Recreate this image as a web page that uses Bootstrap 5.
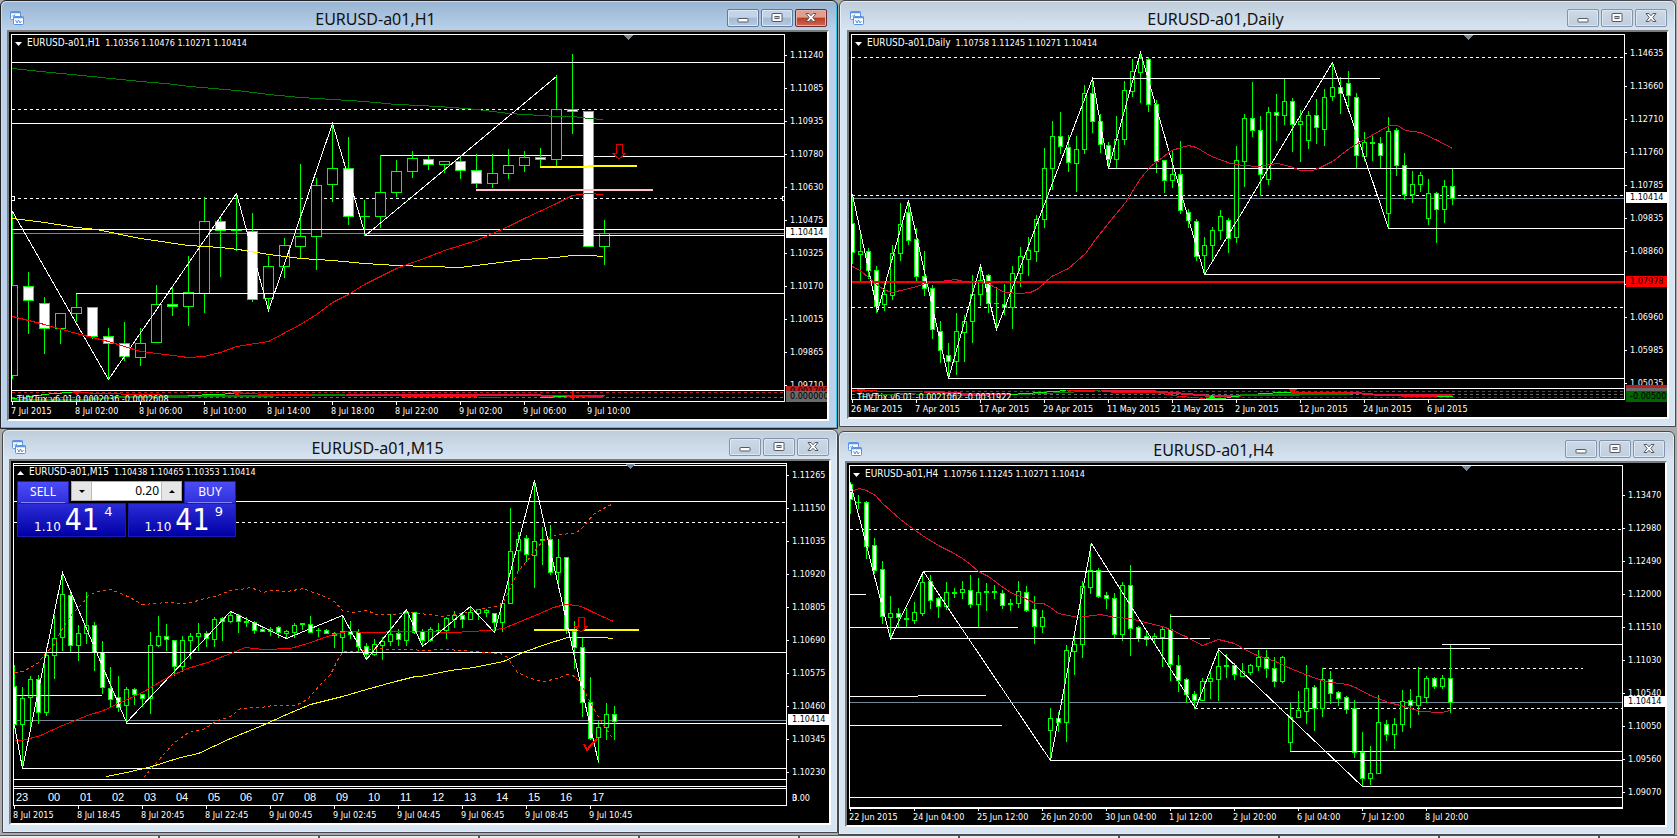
<!DOCTYPE html>
<html lang="en">
<head>
<meta charset="utf-8">
<meta name="viewport" content="width=device-width, initial-scale=1">
<title>EURUSD-a01 charts</title>
<link rel="stylesheet" href="https://cdn.jsdelivr.net/npm/bootstrap@5.3.0/dist/css/bootstrap.min.css">
<style>
:root{--ui:"DejaVu Sans Condensed","DejaVu Sans","Noto Sans",sans-serif}
body{background:#ababab;font-family:var(--ui);overflow:hidden}
.desk{padding-right:1px}
.win{border:1px solid #45484c;border-radius:6px 6px 0 0;background:linear-gradient(#bfcddb,#d7e4f2 29px);box-shadow:inset 0 0 0 1px #e3edf7;padding:0 6px 7px}
.win-active{border-color:#222;background:linear-gradient(#98b4d2,#b9d1ea 29px);box-shadow:inset -1px -1px 0 #35c5e4,inset 1px 1px 0 #c9dcf0;padding-right:8px}
.pos-tr{margin-left:1px;padding:0 6px 7px 7px}
.pos-bl{margin-left:2px;}
.pos-br{margin-right:1px;margin-top:4px;padding-right:7px}
.bar{height:29px;padding:0 2px 0 3px}
.bar h2{font:400 16px/20px "Noto Sans",sans-serif;color:#111;margin:0;padding-top:8px}
.bar .app{margin-top:10px}
.ctl{width:32px;height:18px;margin-top:8px;border:1px solid #8592ad;border-radius:2px;background:linear-gradient(#ccd9e7,#c0cedd);box-shadow:inset 0 0 0 1px #dce7f2;padding:0;display:flex;align-items:center;justify-content:center}
.win-active .ctl{border-color:#64789a;background:linear-gradient(#c3d4e8 45%,#a4bad3 50%,#b5cbe3)}
.win-active .ctl-close{border-color:#6e2a2c;background:linear-gradient(#e0a090 45%,#b93a28 50%,#cc6a50);box-shadow:inset 0 0 0 1px #e5b0a5}
.client{border:2px solid;border-color:#7b7b7b #fff #fff #7b7b7b;background:#000;color:#fff;padding:2px 0 0 2px;font-size:9px;line-height:11px;overflow:hidden}
.pane{display:grid;grid-template-columns:minmax(0,1fr) 42px;margin-bottom:1px}
.pane-end{margin-bottom:0}
.plot{border:1px solid #fff;position:relative;overflow:hidden}
.plot svg{display:block;width:100%;height:100%}
.h-h1{height:355px}.h-d1{height:353px}.h-m15{height:315px}.h-h4{height:331px}
.h-s12{height:12px}.h-s11{height:11px}.h-s8{height:8px}.h-s18{height:18px}
.head{position:absolute;left:3px;top:2px;display:flex;gap:5px;white-space:pre}
.head>svg{width:7px;height:4px;margin-top:5px}
.head b{font-weight:400;font-size:10px;line-height:12px}
.head span{line-height:13px}
.axis{position:relative;white-space:nowrap}
.scale{height:100%;overflow:hidden}
.scale div{height:33px;display:flex;align-items:center}
.scale div::before{content:"";width:2px;height:1px;background:#fff;margin-right:3px}
.tag{position:absolute;left:1px;right:0;height:11px;padding-left:4px;background:#fff;color:#000;line-height:11px;overflow:hidden}
.times{display:flex;height:17px;overflow:hidden;white-space:nowrap}
.times span{flex:0 0 64px}
.times span::before{content:"";display:block;width:1px;height:3px;background:#fff;margin:0 0 1px 1px}
.sub-note{position:absolute;left:5px;top:3px;white-space:pre}
.hours{font:11px/16px "Liberation Sans",sans-serif;display:flex}
.hours span{flex:0 0 32px;padding-left:2px}
.deal{position:absolute;left:3px;top:17px;width:219px;height:56px}
.deal button{border:1px solid #1a1ab4;color:#fff;padding:0;border-radius:0}
.deal .side{width:52px;height:22px;background:linear-gradient(#4c4cf6,#3030dc);font:12px/18px "Noto Sans",sans-serif;border-bottom:0}
.side::after{content:"";display:block;height:1px;margin:1px 3px 0;background:#8484f4}
.deal .px{flex:1;height:34px;background:linear-gradient(#2c2cd8,#0000a4);display:flex;align-items:flex-start;justify-content:center;font:12px/14px "DejaVu Sans",sans-serif;overflow:hidden;padding-left:4px}
.px i{font:30px/31px var(--ui);margin:0 5px 0 4px}
.px span{padding-top:16px}.px sup{top:0;font-size:13px;line-height:15px}
.vol{height:20px;background:#e6e6e6;border:1px solid #aaa;flex:1;margin:0 2px}
.deal .vol button{width:19px;height:18px;border:0;background:#e6e6e6;display:flex;align-items:center;justify-content:center}
.vol button svg{width:6px;height:3px}
.vol input{min-width:0;flex:1;width:20px;border:0;border-left:1px solid #bbb;border-right:1px solid #bbb;text-align:right;font:12px/18px "Noto Sans",sans-serif;padding:0 2px;height:18px;border-radius:0}
.foot{height:3px;margin-top:0;border-top:1px solid #555;background:repeating-linear-gradient(90deg,#e6ecf2 0 158px,#555 158px 160px)}
</style>
</head>
<body>
<svg class="d-none" aria-hidden="true">
  <symbol id="app" viewBox="0 0 14 14"><rect x=".5" y=".5" width="10" height="8" rx="1" fill="#fff" stroke="#5b92e5"/><path d="M0 1.5h11" stroke="#5b92e5" stroke-width="1.5"/><path d="M2 5.5l1-1 1 1 1-2" fill="none" stroke="#5b92e5"/><rect x="3.5" y="5.500" width="10" height="8" rx="1" fill="#fff" stroke="#5b92e5"/><path d="M3 6.500h11" stroke="#5b92e5" stroke-width="1.500"/><path d="M5.500 9l1.500 3 1.500-3 1.500 3 1.500-2" fill="none" stroke="#5b92e5"/></symbol>
  <symbol id="min" viewBox="0 0 12 12"><rect x="1" y="6.500" width="10" height="3.500" rx=".5" fill="#fff" stroke="#555a66"/></symbol>
  <symbol id="max" viewBox="0 0 12 12"><rect x="1" y="1.500" width="10" height="8" rx=".5" fill="#fff" stroke="#555a66"/><rect x="4" y="4.500" width="4" height="2" fill="#bfd0e0" stroke="#555a66"/></symbol>
  <symbol id="cls" viewBox="0 0 12 12"><path d="M1 1.500h3l2 2.300 2-2.300h3L7.800 5.500 11 9.500H8L6 7.300 4 9.500H1l3.200-4z" fill="#fff" stroke="#555a66"/></symbol>
  <symbol id="down" viewBox="0 0 7 4"><path d="M0 0h7L3.500 4z" fill="#fff"/></symbol>
  <symbol id="up" viewBox="0 0 7 4"><path d="M0 4h7L3.500 0z" fill="#fff"/></symbol>
</svg>

<main class="desk row g-0">
  <div class="col-6">
    <section class="win win-active">
      <header class="bar d-flex">
        <svg class="app" width="14" height="14"><use href="#app"/></svg>
        <h2 class="flex-fill text-center">EURUSD-a01,H1</h2>
        <div class="d-flex" style="gap:2px">
          <button class="ctl" aria-label="Minimize"><svg width="12" height="12"><use href="#min"/></svg></button>
          <button class="ctl" aria-label="Maximize"><svg width="12" height="12"><use href="#max"/></svg></button>
          <button class="ctl ctl-close" aria-label="Close"><svg width="12" height="12"><use href="#cls"/></svg></button>
        </div>
      </header>
      <div class="client">
        <div class="pane h-h1">
          <div class="plot"><svg id="h1"></svg><div class="head"><svg><use href="#down"/></svg><b>EURUSD-a01,H1</b><span>1.10356 1.10476 1.10271 1.10414</span></div></div>
          <div class="axis" data-first="5" data-labels="1.11240 1.11085 1.10935 1.10780 1.10630 1.10475 1.10325 1.10170 1.10015 1.09865 1.09710" data-tags="193,1.10414,#fff,#000"></div>
        </div>
        <div class="pane pane-end h-s12">
          <div class="plot"><svg id="h1s"></svg><div class="sub-note">THVTrix v6.01 0.0002036 -0.0002608</div></div>
          <div class="axis" data-tags="-4,0.001700,#b22222,#000;1,0.0000000,#696969,#000"></div>
        </div>
        <div class="times"><span>7 Jul 2015</span><span>8 Jul 02:00</span><span>8 Jul 06:00</span><span>8 Jul 10:00</span><span>8 Jul 14:00</span><span>8 Jul 18:00</span><span>8 Jul 22:00</span><span>9 Jul 02:00</span><span>9 Jul 06:00</span><span>9 Jul 10:00</span></div>
      </div>
    </section>

    <section class="win pos-bl">
      <header class="bar d-flex">
        <svg class="app" width="14" height="14"><use href="#app"/></svg>
        <h2 class="flex-fill text-center">EURUSD-a01,M15</h2>
        <div class="d-flex" style="gap:2px">
          <button class="ctl" aria-label="Minimize"><svg width="12" height="12"><use href="#min"/></svg></button>
          <button class="ctl" aria-label="Maximize"><svg width="12" height="12"><use href="#max"/></svg></button>
          <button class="ctl" aria-label="Close"><svg width="12" height="12"><use href="#cls"/></svg></button>
        </div>
      </header>
      <div class="client">
        <div class="pane h-m15">
          <div class="plot"><svg id="m15"></svg><div class="head"><svg><use href="#up"/></svg><b>EURUSD-a01,M15</b><span>1.10438 1.10465 1.10353 1.10414</span></div>
            <div class="deal bg-black">
              <div class="d-flex">
                <button class="side">SELL</button>
                <div class="vol d-flex">
                  <button aria-label="Decrease volume"><svg><path d="M0 0h6L3 3z"/></svg></button>
                  <input type="text" value="0.20" aria-label="Volume">
                  <button aria-label="Increase volume"><svg><path d="M0 3h6L3 0z"/></svg></button>
                </div>
                <button class="side">BUY</button>
              </div>
              <div class="d-flex" style="gap:2px">
                <button class="px" aria-label="Sell at 1.10414"><span>1.10</span><i>41</i><sup>4</sup></button>
                <button class="px" aria-label="Buy at 1.10419"><span>1.10</span><i>41</i><sup>9</sup></button>
              </div>
            </div>
          </div>
          <div class="axis" data-first="-4" data-labels="1.11265 1.11150 1.11035 1.10920 1.10805 1.10690 1.10575 1.10460 1.10345 1.10230" data-tags="251,1.10414,#fff,#000"></div>
        </div>
        <div class="pane h-s8"><div class="plot"></div><div class="axis"></div></div>
        <div class="pane pane-end h-s18">
          <div class="plot hours" id="hours"></div>
          <div class="axis" data-tags="5,3,transparent,#fff;5,0.00,transparent,#fff"></div>
        </div>
        <div class="times"><span>8 Jul 2015</span><span>8 Jul 18:45</span><span>8 Jul 20:45</span><span>8 Jul 22:45</span><span>9 Jul 00:45</span><span>9 Jul 02:45</span><span>9 Jul 04:45</span><span>9 Jul 06:45</span><span>9 Jul 08:45</span><span>9 Jul 10:45</span></div>
      </div>
    </section>
  </div>

  <div class="col-6">
    <section class="win pos-tr">
      <header class="bar d-flex">
        <svg class="app" width="14" height="14"><use href="#app"/></svg>
        <h2 class="flex-fill text-center">EURUSD-a01,Daily</h2>
        <div class="d-flex" style="gap:2px">
          <button class="ctl" aria-label="Minimize"><svg width="12" height="12"><use href="#min"/></svg></button>
          <button class="ctl" aria-label="Maximize"><svg width="12" height="12"><use href="#max"/></svg></button>
          <button class="ctl" aria-label="Close"><svg width="12" height="12"><use href="#cls"/></svg></button>
        </div>
      </header>
      <div class="client">
        <div class="pane h-d1">
          <div class="plot"><svg id="d1"></svg><div class="head"><svg><use href="#down"/></svg><b>EURUSD-a01,Daily</b><span>1.10758 1.11245 1.10271 1.10414</span></div></div>
          <div class="axis" data-first="3" data-labels="1.14635 1.13660 1.12710 1.11760 1.10785 1.09835 1.08860 - 1.06960 1.05985 1.05035" data-tags="158,1.10414,#fff,#000;242,1.07978,#f00,#000"></div>
        </div>
        <div class="pane pane-end h-s12">
          <div class="plot"><svg id="d1s"></svg><div class="sub-note">THVTrix v6.01 -0.0021062 -0.0031922</div></div>
          <div class="axis" data-tags="-3,,#b22222,#000;0,,#696969,#000;3,-0.00500,#006400,#000"></div>
        </div>
        <div class="times"><span>26 Mar 2015</span><span>7 Apr 2015</span><span>17 Apr 2015</span><span>29 Apr 2015</span><span>11 May 2015</span><span>21 May 2015</span><span>2 Jun 2015</span><span>12 Jun 2015</span><span>24 Jun 2015</span><span>6 Jul 2015</span></div>
      </div>
    </section>

    <section class="win pos-br">
      <header class="bar d-flex">
        <svg class="app" width="14" height="14"><use href="#app"/></svg>
        <h2 class="flex-fill text-center">EURUSD-a01,H4</h2>
        <div class="d-flex" style="gap:2px">
          <button class="ctl" aria-label="Minimize"><svg width="12" height="12"><use href="#min"/></svg></button>
          <button class="ctl" aria-label="Maximize"><svg width="12" height="12"><use href="#max"/></svg></button>
          <button class="ctl" aria-label="Close"><svg width="12" height="12"><use href="#cls"/></svg></button>
        </div>
      </header>
      <div class="client">
        <div class="pane h-h4">
          <div class="plot"><svg id="h4"></svg><div class="head"><svg><use href="#down"/></svg><b>EURUSD-a01,H4</b><span>1.10756 1.11245 1.10271 1.10414</span></div></div>
          <div class="axis" data-first="14" data-labels="1.13470 1.12980 1.12490 1.12000 1.11510 1.11030 1.10540 1.10050 1.09560 1.09070" data-tags="231,1.10414,#fff,#000"></div>
        </div>
        <div class="pane pane-end h-s11"><div class="plot"></div><div class="axis"></div></div>
        <div class="times"><span>22 Jun 2015</span><span>24 Jun 04:00</span><span>25 Jun 12:00</span><span>26 Jun 20:00</span><span>30 Jun 04:00</span><span>1 Jul 12:00</span><span>2 Jul 20:00</span><span>6 Jul 04:00</span><span>7 Jul 12:00</span><span>8 Jul 20:00</span></div>
      </div>
    </section>
  </div>
</main>
<div class="foot"></div>

<script src="https://cdn.jsdelivr.net/npm/bootstrap@5.3.0/dist/js/bootstrap.bundle.min.js"></script>
<script>
const END = 4000; // lines that run to the right edge are clipped by the plot

// Price scales and price tags; a dash leaves only the tick
document.querySelectorAll('.axis').forEach(a => {
  let html = '';
  if (a.dataset.labels) html += '<div class="scale"><section style="margin-top:' + a.dataset.first + 'px">' +
    a.dataset.labels.split(' ').map(t => '<div>' + (t === '-' ? '' : t) + '</div>').join('') + '</section></div>';
  (a.dataset.tags || '').split(';').filter(Boolean).forEach(t => {
    const [top, text, bg, fg] = t.split(',');
    html += `<span class="tag" style="top:${top}px;background:${bg};color:${fg}">${text}</span>`;
  });
  a.innerHTML = html;
});

document.getElementById('hours').innerHTML =
  [23, ...Array(18).keys()].map(h => '<span>' + String(h).padStart(2, '0') + '</span>').join('');

const candle = (x, half, [hi, top, bot, lo, kind]) => {
  hi = +hi; top = +top; bot = +bot; lo = +lo;
  let s = `<path d="M${x + .5} ${hi}V${top}M${x + .5} ${bot}V${lo + 1}" stroke="#0f0"/>`;
  return s + (top === bot
    ? `<path d="M${x - half} ${top + .5}h${2 * half + 1}" stroke="#0f0"/>`
    : `<rect x="${x - half + .5}" y="${top + .5}" width="${2 * half}" height="${bot - top}" fill="${kind === 'x' ? '#fff' : '#000'}" stroke="#0f0"/>`);
};
const level = ([y, a, b, color = '#fff', dash = '', w = 1]) =>
  `<path d="M${a} ${w === 1 ? y + .5 : y}H${b || END}" stroke="${color}" stroke-width="${w}" ${dash ? `stroke-dasharray="${dash}"` : ''}/>`;
const curve = ([color, pts, w = 1, dash = '']) =>
  `<polyline points="${pts}" fill="none" stroke="${color}" stroke-width="${w}" transform="translate(.5 .5)" ${dash ? `stroke-dasharray="${dash}"` : ''}/>`;

function draw(id, c) {
  const [ox, oy] = c.origin;
  const candles = (c.candles || '').trim().split(/\s*;\s*/).filter(Boolean)
    .map((t, i) => candle(c.x0 + i * c.step, c.half, t.split(' '))).join('');
  document.getElementById(id).innerHTML = `<g transform="translate(${-ox} ${-oy})" shape-rendering="crispEdges">` +
    (c.under || []).map(level).join('') + candles + (c.over || []).map(level).join('') +
    (c.curves || []).map(curve).join('') + (c.extra || '') + '</g>';
}
const arrow = (x, y) => `<path d="M${x - 3} ${y}h6v9h4l-7 6-7-6h4z" fill="#000" stroke="#e00000"/>`;
const shift = (x, y) => `<path d="M${x - 5} ${y}h10l-5 5z" fill="#778899"/>`;
const D = '3 3', SL = '#778899';

draw('h1', {
  origin: [12, 35], x0: 12, step: 16, half: 5,
  candles: `212 285 375 378 o;272 286 300 333 x;297 303 328 353 x;313 313 328 343 o;293 307 313 321 o;307 307 336 338 x;328 336 343 378 x;322 343 356 360 x;328 343 357 365 o;285 304 342 342 o;287 304 306 315 x;256 292 306 325 o;197 221 293 312 o;217 221 230 276 x;193 230 230 250 o;213 231 299 301 x;256 266 298 310 o;238 245 266 277 o;164 236 246 258 o;178 185 236 269 o;123 168 184 201 o;137 168 216 224 x;200 216 216 235 o;155 192 216 227 o;160 171 192 196 o;151 158 171 177 o;156 159 164 169 x;161 161 164 172 o;155 161 170 178 x;154 170 183 187 x;154 173 183 187 o;149 165 173 178 o;151 157 165 171 o;148 157 159 165 x;75 109 159 165 o;54 109 111 133 x;111 111 246 246 x;220 233 246 264 o`,
  under: [[233, 12, 0, SL], [109, 12, 0, '#fff', D], [198, 12, 0, '#fff', D], [155, 380, 583], [156, 583, 0]],
  over: [[62, 12], [123, 12], [229, 12], [235, 365], [293, 76], [167, 540, 588, '#ff0', '', 2], [166, 588, 637, '#ff0', '', 2], [190, 476, 653, '#ffc0cb', '', 2]],
  curves: [
    ['#fff', '12,211 108,379 236,193 268,310 332,123 365,235 556,76'],
    ['#008000', '12,68 50,72 82,75 110,78 140,81 165,83 190,86 236,90 268,94 300,97 332,99 364,101 396,104 421,105 452,107 476,109 508,113 540,115 556,116 572,116 588,118 603,119'],
    ['#ff0', '12,218 44,222 76,227 96,229 140,238 188,245 220,247 238,249 268,254 300,258 332,260 364,263 396,265 428,266 460,267 492,263 524,259 556,257 572,255 590,255 603,256'],
    ['#f00', '12,316 28,320 44,324 76,333 108,341 140,351 156,353 188,357 204,356 220,352 236,346 268,341 300,324 316,314 332,302 348,294 364,284 396,268 412,262 421,259 444,250 476,240 508,226 524,218 556,203 572,195 588,193 603,194']],
  extra: arrow(619, 144) + shift(628, 35) + '<rect x="11.5" y="196.500" width="3" height="4" fill="#000" stroke="#fff"/><rect x="782.5" y="196.500" width="3" height="4" fill="#000" stroke="#fff"/>'
});
draw('h1s', {
  origin: [12, 391],
  over: [[392, 12, 0, '#b22222', D], [397, 12, 0, '#696969', D]],
  curves: [['#008000', '12,399 90,399 125,396 188,396 275,395 345,394', 2], ['#0f0', '12,398 30,396 52,393 72,392'], ['#f00', '76,392 100,393 140,394 180,395 188,395'], ['#0f0', '188,395 215,394 235,393'],
    ['#f00', '240,393 275,394 345,395 453,396 500,397'], ['#dc143c', '345,394 476,394 604,396', 2], ['#0f0', '540,397 566,396'], ['#f00', '572,396 603,397']],
  extra: '<path d="M72 391h9l-4 5zM232 391h9l-4 6zM568 395h9l-4 5zM572 390h2v10h-2z" fill="#f00"/>'
});

draw('d1', {
  origin: [852, 35], x0: 852, step: 8, half: 2,
  candles: `194 223 252 263 x;230 251 254 281 o;248 251 270 278 x;266 270 306 312 x;283 294 304 310 o;245 253 295 299 o;203 224 253 260 o;201 212 240 244 x;228 239 276 280 x;251 276 288 295 x;285 288 329 338 x;321 331 350 362 x;343 355 361 377 x;313 331 361 374 o;315 321 332 361 o;275 294 321 342 o;265 280 294 305 o;274 275 303 312 x;287 303 303 329 o;284 304 307 314 x;266 273 307 328 o;247 256 273 286 o;237 250 259 275 o;215 219 251 261 o;148 168 219 227 o;121 136 168 189 o;112 136 146 153 x;135 147 162 171 x;136 149 163 191 o;85 93 149 153 o;79 93 121 132 x;114 121 144 152 x;142 145 159 168 x;116 139 159 167 o;81 90 139 144 o;59 71 91 96 o;53 58 72 102 o;57 59 104 111 x;100 104 161 172 x;160 160 180 192 x;150 174 180 187 o;141 174 210 213 x;209 212 220 227 x;219 221 256 260 x;237 245 255 274 o;227 230 245 259 o;210 216 230 239 o;218 220 238 252 x;146 160 237 242 o;114 118 161 186 o;82 118 130 136 x;116 130 174 195 x;107 112 179 184 o;94 112 115 140 x;79 101 115 124 o;98 101 124 151 x;110 121 124 161 o;111 115 140 148 o;99 115 127 143 x;89 97 129 145 o;62 87 96 100 o;77 87 93 113 x;71 83 95 106 x;93 97 155 167 x;132 142 156 160 o;134 142 143 160 o;137 143 155 168 x;117 131 213 228 o;128 130 165 175 x;153 165 194 199 x;171 184 194 202 o;172 175 184 191 o;179 193 218 224 o;192 193 209 242 x;180 186 209 222 o;168 186 198 204 x`,
  under: [[198, 852, 0, SL], [57, 852, 0, '#fff', D], [195, 852, 0, '#fff', D], [307, 852, 0, '#fff', D]],
  over: [[78, 1092, 1380], [168, 1108], [228, 1388], [274, 1204], [378, 948], [282, 852, 0, '#f00', '', 2]],
  curves: [
    ['#fff', '852,194 877,311 908,200 948,378 980,265 996,329 1092,78 1108,168 1140,52 1204,274 1332,62 1388,228'],
    ['#dc143c', '852,266 861,271 868,277 875,283 883,289 891,292 905,289 916,286 925,283 940,281 955,279 963,281 988,283 996,288 1005,292 1020,293 1030,292 1038,288 1051,276 1068,268 1085,253 1095,239 1111,219 1125,202 1140,178 1150,166 1158,160 1171,150 1188,145 1196,147 1211,156 1230,163 1243,165 1257,166 1277,163 1290,166 1300,170 1312,170 1320,167 1332,161 1349,148 1364,139 1380,130 1389,125 1397,125 1405,130 1420,132 1437,140 1452,148']],
  extra: shift(1468, 35)
});
draw('d1s', {
  origin: [852, 389],
  over: [[391, 852, 0, '#b22222', D], [394, 852, 0, '#696969', D], [397, 852, 0, '#006400', D]],
  curves: [['#008000', '860,396 900,393 960,395 1020,394 1085,391 1100,390'], ['#f00', '852,390 900,391 945,392'], ['#dc143c', '925,391 960,393 1010,394', 2], ['#0f0', '1010,394 1040,392 1066,390'], ['#f00', '1066,390 1095,390'],
    ['#dc143c', '1101,390 1155,391 1205,395 1240,395', 2], ['#f00', '1110,392 1155,392 1180,396 1205,398'], ['#0f0', '1205,398 1225,398'], ['#0f0', '1227,397 1250,394 1280,392 1290,392'],
    ['#008000', '1240,395 1300,394 1350,393', 2], ['#f00', '1290,392 1350,392', 2], ['#dc143c', '1350,392 1372,394 1452,395', 2], ['#f00', '1400,396 1436,396'], ['#0f0', '1436,396 1452,396']],
  extra: '<path d="M856 389h9l-4 5zM1288 389h9l-4 5z" fill="#f00"/><path d="M1207 399h9l-4-5z" fill="#0f0"/>'
});

draw('m15', {
  origin: [14, 464], x0: 14, step: 8, half: 2,
  candles: `665 686 724 728 x;687 698 724 768 o;676 679 697 727 o;675 679 712 723 x;647 655 712 715 o;615 638 655 678 o;572 594 637 650 o;591 595 645 652 x;625 633 645 660 o;592 625 633 643 o;622 625 652 670 x;641 652 687 693 x;667 688 699 707 x;676 697 707 711 x;687 689 705 722 o;688 689 694 704 x;694 694 698 706 x;632 645 698 713 o;616 636 645 646 o;624 636 639 650 x;640 640 666 675 x;636 640 666 671 o;633 636 640 658 o;623 633 636 650 o;631 633 638 646 x;617 619 639 646 o;617 618 621 640 x;612 615 621 622 o;614 615 621 632 x;617 621 622 626 o;621 622 630 633 x;627 629 631 631 x;627 629 631 635 o;626 627 632 637 x;630 631 633 638 o;623 625 632 637 o;623 623 624 629 o;616 624 632 632 x;628 630 630 636 o;629 630 633 633 x;632 633 635 647 o;616 631 637 651 o;621 631 634 638 x;629 632 646 652 x;643 646 654 659 x;639 644 654 655 o;637 641 645 659 o;614 634 641 645 o;629 633 639 645 x;609 612 640 645 o;612 612 632 633 x;629 631 640 645 x;627 629 640 641 o;623 630 630 633 o;617 618 630 638 o;611 615 619 627 o;613 615 619 627 x;607 612 619 619 o;609 609 613 619 o;609 610 612 616 o;613 613 622 632 x;603 603 622 631 o;508 551 603 603 o;532 539 550 570 o;535 538 554 561 x;481 541 555 587 o;527 539 540 564 o;525 539 572 574 x;539 557 572 584 o;557 557 629 633 x;621 631 647 668 x;637 647 702 716 x;677 702 738 739 x;721 727 737 762 o;703 714 727 739 o;706 714 721 739 x`,
  under: [[720, 14, 0, SL], [522, 14, 0, '#fff', D]],
  over: [[465, 14], [501, 14], [652, 14], [695, 14, 102], [723, 126], [768, 22], [630, 534, 639, '#ff0', '', 2]],
  curves: [
    ['#ff4500', '14,672 22,671 30,667 38,662 45,653 53,645 62,628 72,613 82,603 88,595 97,591 110,589 123,594 133,599 142,604 167,602 180,603 192,602 200,599 215,596 230,590 240,589 250,587 263,592 270,590 287,591 303,588 313,592 327,597 335,602 343,611 353,612 367,610 375,614 393,614 413,612 420,613 443,616 460,613 477,609 497,606 503,602 510,587 518,570 527,560 537,547 543,540 557,534 575,533 583,526 593,514 603,508 613,503', 1, D],
    ['#ff4500', '143,777 150,769 158,760 173,743 188,732 203,729 217,720 230,716 240,708 260,707 273,705 295,705 307,699 320,684 330,674 338,658 343,651 357,651 377,648 393,649 413,649 420,650 447,649 473,651 500,653 507,657 517,672 530,678 543,681 557,678 567,674 575,676 583,688 590,703 600,720 613,739', 1, D],
    ['#ff0', '106,776 126,772 148,767 180,757 198,753 230,738 262,725 286,714 310,704 342,696 366,689 395,681 415,676 420,676 450,670 473,667 503,661 520,653 542,645 567,637 602,637 613,638'],
    ['#f00', '14,740 22,740 40,735 62,725 87,715 103,710 118,703 140,693 167,677 187,668 207,662 230,653 245,647 263,649 290,648 307,643 333,634 347,631 367,632 405,631 420,631 453,632 487,630 503,628 520,621 537,614 553,607 565,604 577,605 583,607 593,612 613,621'],
    ['#fff', '14,725 22,768 62,572 126,722 230,611 286,638 342,615 366,659 406,609 422,646 470,606 494,632 534,480 598,762']],
  extra: arrow(581, 617) + shift(630, 464) + '<path d="M584 744l3 6 3-4 7-7" fill="none" stroke="#f00" stroke-width="2"/>'
});

draw('h4', {
  origin: [850, 466], x0: 850, step: 8, half: 2,
  candles: `482 484 499 513 x;495 502 502 508 o;501 502 546 558 x;538 545 570 573 x;561 569 616 623 x;596 613 617 637 o;608 613 617 627 x;608 618 619 626 o;602 612 620 623 o;572 582 613 615 o;575 581 600 608 x;597 598 606 617 x;582 592 606 609 o;588 592 593 597 o;581 589 592 598 o;575 590 604 607 x;578 592 604 627 o;583 591 592 610 o;585 591 592 598 o;590 593 605 608 x;599 603 604 610 o;581 591 603 607 o;586 592 610 611 x;596 609 626 643 x;610 617 626 632 o;708 718 730 760 o;712 718 722 731 x;645 650 722 741 o;635 644 651 674 o;581 586 644 657 o;544 570 587 593 o;568 570 596 597 x;592 595 598 608 x;593 598 634 638 x;582 585 634 640 o;565 585 628 655 x;626 627 638 641 x;632 636 639 645 x;633 636 638 642 o;626 629 637 666 o;614 629 664 680 x;655 665 680 691 x;678 679 694 702 x;691 694 700 708 x;678 681 700 700 o;670 678 681 698 o;649 666 679 700 o;654 665 666 677 o;663 665 674 679 x;663 671 676 676 o;664 665 672 674 o;650 657 666 670 o;650 657 668 677 x;657 668 681 686 x;656 657 681 682 o;703 717 742 751 o;691 710 717 717 o;665 688 711 723 o;685 687 708 730 x;668 679 708 716 o;671 679 693 703 x;691 692 698 705 x;696 697 709 713 x;700 708 752 757 x;732 752 778 786 x;746 773 778 784 o;695 722 773 773 o;720 724 734 740 x;718 724 734 748 o;690 701 724 731 o;689 700 705 727 x;667 696 705 714 o;676 678 697 702 o;677 678 686 688 x;675 678 686 688 o;645 678 702 712 x`,
  under: [[702, 850, 0, SL], [529, 850, 0, '#fff', D], [708, 1195, 0, '#fff', D], [668, 1323, 1583, '#fff', D]],
  over: [[571, 923], [594, 850, 866], [627, 850, 1018], [638, 890, 1210], [616, 1170], [696, 850, 918], [695, 918, 986], [725, 850, 1002], [760, 1050], [648, 1218, 1490], [644, 1442], [751, 1290], [786, 1362]],
  curves: [
    ['#dc143c', '850,491 859,488 866,490 875,495 882,503 890,510 900,519 912,528 925,537 938,545 950,551 962,558 970,564 978,571 988,576 1000,585 1010,592 1025,598 1035,603 1043,603 1050,607 1058,613 1078,617 1100,614 1115,617 1130,618 1145,622 1162,626 1170,629 1185,636 1202,645 1218,639 1234,643 1246,650 1257,655 1275,661 1290,668 1305,674 1324,681 1347,684 1355,687 1370,695 1388,702 1404,706 1420,711 1441,712 1450,710'],
    ['#fff', '850,483 890,638 923,571 1050,760 1091,543 1195,708 1218,649 1362,786']],
  extra: shift(1466, 466)
});
</script>
</body>
</html>
